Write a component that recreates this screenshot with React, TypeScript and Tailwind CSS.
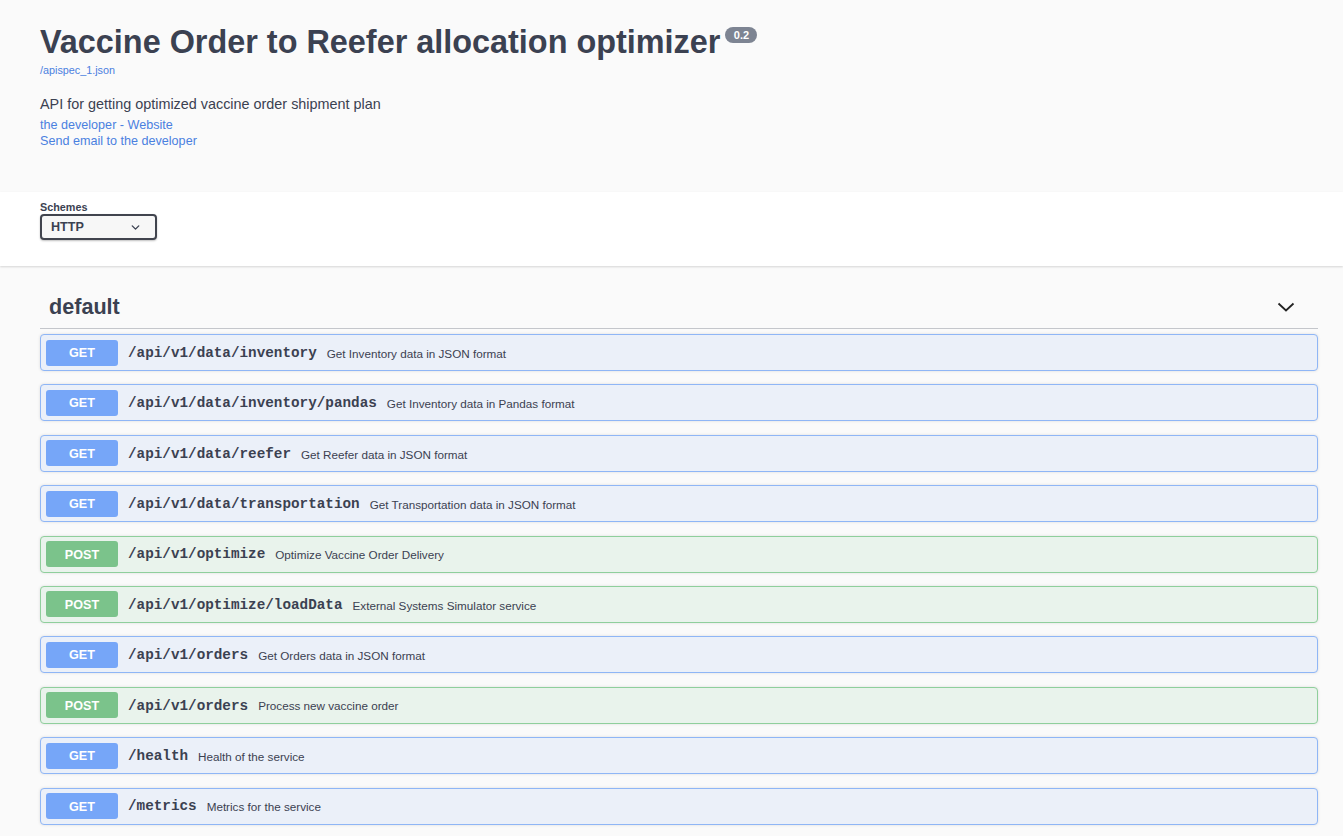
import { ChevronDown } from "lucide-react";

type Op = { method: "GET" | "POST"; path: string; summary: string };

const ops: Op[] = [
  { method: "GET", path: "/api/v1/data/inventory", summary: "Get Inventory data in JSON format" },
  { method: "GET", path: "/api/v1/data/inventory/pandas", summary: "Get Inventory data in Pandas format" },
  { method: "GET", path: "/api/v1/data/reefer", summary: "Get Reefer data in JSON format" },
  { method: "GET", path: "/api/v1/data/transportation", summary: "Get Transportation data in JSON format" },
  { method: "POST", path: "/api/v1/optimize", summary: "Optimize Vaccine Order Delivery" },
  { method: "POST", path: "/api/v1/optimize/loadData", summary: "External Systems Simulator service" },
  { method: "GET", path: "/api/v1/orders", summary: "Get Orders data in JSON format" },
  { method: "POST", path: "/api/v1/orders", summary: "Process new vaccine order" },
  { method: "GET", path: "/health", summary: "Health of the service" },
  { method: "GET", path: "/metrics", summary: "Metrics for the service" },
];

function OpBlock({ op }: { op: Op }) {
  const isGet = op.method === "GET";
  return (
    <div
      className={
        isGet
          ? "mb-[13.4px] flex h-[37px] items-center rounded-[4px] border border-[#8fb6f6] bg-[#ebf0f9] px-[5px] shadow-[0_0_3px_rgba(0,0,0,0.12)]"
          : "mb-[13.4px] flex h-[37px] items-center rounded-[4px] border border-[#8fcf9c] bg-[#e9f3ec] px-[5px] shadow-[0_0_3px_rgba(0,0,0,0.12)]"
      }
    >
      <span
        className={
          isGet
            ? "flex h-[26px] w-[72px] items-center justify-center rounded-[3px] bg-[#76a6f8] pt-[2px] text-[12.6px] font-bold text-white"
            : "flex h-[26px] w-[72px] items-center justify-center rounded-[3px] bg-[#7bc38b] pt-[2px] text-[12.6px] font-bold text-white"
        }
      >
        {op.method}
      </span>
      <span className="ml-[10px] pt-[2px] font-['Liberation_Mono',monospace] text-[14.3px] font-bold text-[#3b4151]">{op.path}</span>
      <span className="ml-[10px] pt-[2px] text-[11.7px] text-[#3b4151]">{op.summary}</span>
    </div>
  );
}

export default function App() {
  return (
    <div className="min-h-screen bg-[#fafafa] font-['Liberation_Sans',Arial,sans-serif] text-[#3b4151]">
      {/* info */}
      <div className="h-[192px] pl-[40px] pt-[22px]">
        <div className="flex items-start">
          <h2 className="h-[40px] text-[32.4px] font-bold leading-[40px] text-[#3b4151]">
            Vaccine Order to Reefer allocation optimizer
          </h2>
          <span className="ml-[5px] mt-[5px] flex h-[16px] w-[32px] items-center justify-center rounded-full bg-[#7d8492] text-[11px] font-bold text-white">
            0.2
          </span>
        </div>
        <a className="mt-[1px] block h-[14px] text-[10.8px] leading-[14px] text-[#4a80e0]">/apispec_1.json</a>
        <p className="mt-[18px] text-[14.4px] leading-[18px]">API for getting optimized vaccine order shipment plan</p>
        <div className="mt-[4px] text-[12.6px] leading-[16px] text-[#4a80e0]">
          <a className="block">the developer - Website</a>
          <a className="block">Send email to the developer</a>
        </div>
      </div>

      {/* schemes */}
      <div className="h-[74px] bg-white pl-[40px] pt-[9px] shadow-[0_1px_2px_rgba(0,0,0,0.15)]">
        <div className="text-[10.8px] font-bold leading-[13px]">Schemes</div>
        <div className="flex h-[26px] w-[117px] items-center justify-between rounded-[4px] border-2 border-[#41444e] bg-[#f7f7f7] pl-[9px] pr-[13px] shadow-[0_1px_2px_rgba(0,0,0,0.25)]">
          <span className="text-[12.6px] font-bold">HTTP</span>
          <ChevronDown size={13} strokeWidth={2.5} className="text-[#3b4151]" />
        </div>
      </div>

      {/* default tag */}
      <div className="pl-[40px] pr-[25px] pt-[20px]">
        <div className="flex h-[43px] items-center justify-between border-b border-[#c4c6cb] pl-[9px] pr-[23px]">
          <span className="text-[21.6px] font-bold">default</span>
          <svg width="18" height="10" viewBox="0 0 18 10" fill="none">
            <path d="M1.5 1.5 L9 8.5 L16.5 1.5" stroke="#222" strokeWidth="1.8" />
          </svg>
        </div>
        <div className="pt-[5px]">
          {ops.map((op) => (
            <OpBlock key={op.method + op.path} op={op} />
          ))}
        </div>
      </div>
    </div>
  );
}
